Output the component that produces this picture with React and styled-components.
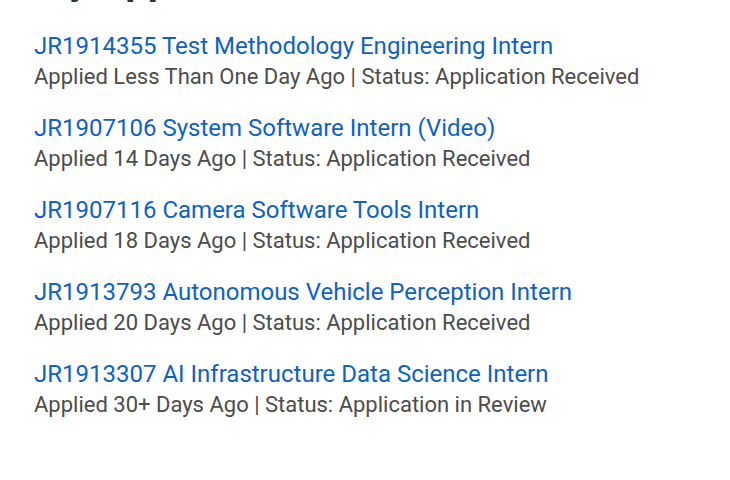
import React from "react";
import styled, { createGlobalStyle } from "styled-components";

const GlobalStyle = createGlobalStyle`
  *, *::before, *::after { box-sizing: border-box; }
  body {
    margin: 0;
    background: #ffffff;
    color: #4c4c4c;
    font-family: Roboto, "Liberation Sans", sans-serif;
  }
`;

const Page = styled.main`
  padding: 0 34px 32px;
  overflow: hidden;
`;

const Heading = styled.h1`
  margin: -43px 0 25px;
  font-size: 40px;
  line-height: 48px;
  font-weight: 700;
  color: #333333;
`;

const List = styled.ul`
  display: flex;
  flex-direction: column;
  gap: 20px;
  margin: 0;
  padding: 0;
  list-style: none;
`;

const Item = styled.li`
  display: flex;
  flex-direction: column;
  align-items: flex-start;
`;

const JobLink = styled.a`
  font-size: 24px;
  line-height: 32px;
  color: #0f62bf;
  text-decoration: none;

  &:hover { text-decoration: underline; }
`;

const Meta = styled.p`
  margin: 0;
  font-size: 22px;
  line-height: 30px;
`;

const applications = [
  { id: "JR1914355", title: "Test Methodology Engineering Intern", applied: "Less Than One Day Ago", status: "Application Received" },
  { id: "JR1907106", title: "System Software Intern (Video)", applied: "14 Days Ago", status: "Application Received" },
  { id: "JR1907116", title: "Camera Software Tools Intern", applied: "18 Days Ago", status: "Application Received" },
  { id: "JR1913793", title: "Autonomous Vehicle Perception Intern", applied: "20 Days Ago", status: "Application Received" },
  { id: "JR1913307", title: "AI Infrastructure Data Science Intern", applied: "30+ Days Ago", status: "Application in Review" },
];

export default function App() {
  return (
    <>
      <GlobalStyle />
      <Page>
        <Heading>My Applications</Heading>
        <List>
          {applications.map(({ id, title, applied, status }) => (
            <Item key={id}>
              <JobLink href={`#${id}`}>{`${id} ${title}`}</JobLink>
              <Meta>{`Applied ${applied} | Status: ${status}`}</Meta>
            </Item>
          ))}
        </List>
      </Page>
    </>
  );
}
